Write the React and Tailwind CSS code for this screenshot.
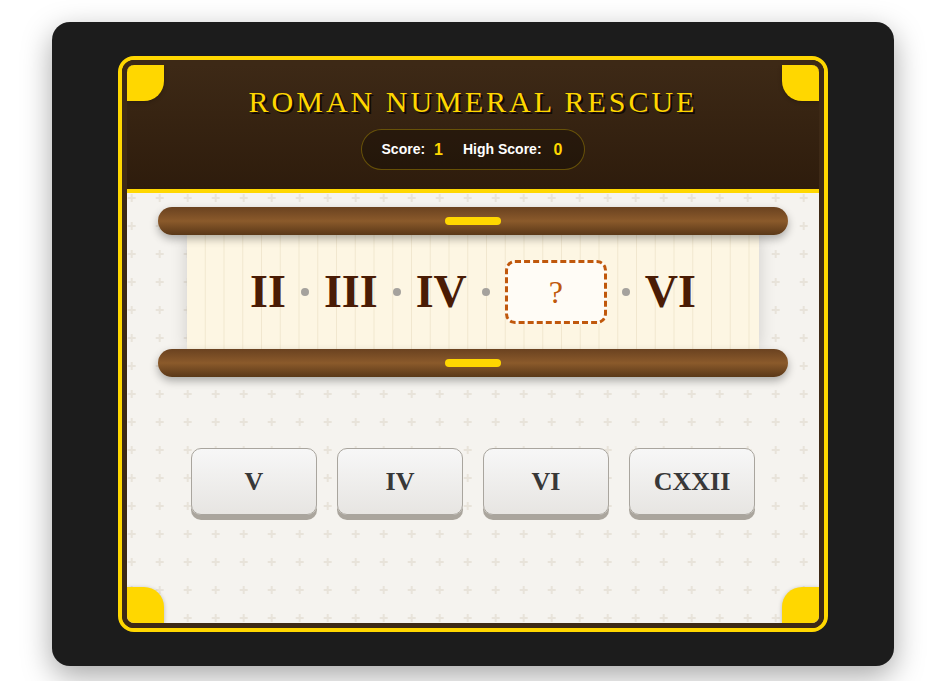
import React from "react";

const SERIF = "font-['Liberation_Serif','Times_New_Roman',serif]";
const SANS = "font-['Liberation_Sans',Arial,sans-serif]";

function Corner({ pos }) {
  const map = {
    tl: "top-0 left-0 rounded-br-[20px]",
    tr: "top-0 right-0 rounded-bl-[20px]",
    bl: "bottom-0 left-0 rounded-tr-[20px]",
    br: "bottom-0 right-0 rounded-tl-[20px]",
  };
  return (
    <div
      className={`absolute z-20 w-[37px] h-[36px] bg-[#ffd700] shadow-[0_1px_4px_rgba(0,0,0,0.25)] ${map[pos]}`}
    />
  );
}

function Rod() {
  return (
    <div className="relative z-10 mx-auto w-[630px] h-[28px] rounded-full bg-gradient-to-b from-[#6a4220] via-[#8b5a2b] to-[#5a3818] shadow-[0_4px_8px_rgba(0,0,0,0.3)] flex items-center justify-center">
      <div className="w-[56px] h-[8px] rounded-full bg-[#ffd700]" />
    </div>
  );
}

function Dot() {
  return <div className="w-[8px] h-[8px] rounded-full bg-[#a5a29d]" />;
}

function Numeral({ children }) {
  return (
    <span className={`${SERIF} text-[46px] font-bold leading-none text-[#4a1c05]`}>
      {children}
    </span>
  );
}

function Choice({ label }) {
  return (
    <button
      className={`${SERIF} w-[126px] h-[67px] rounded-[10px] border border-[#a9a59e] bg-gradient-to-b from-[#f7f7f7] to-[#e7e5e2] shadow-[0_5px_0_#aaa59d] text-[26px] font-bold text-[#383838] flex items-center justify-center`}
    >
      {label}
    </button>
  );
}

export default function App() {
  return (
    <div className="w-[938px] min-h-[681px] bg-white pl-[52px] pt-[22px]">
      <div className="w-[842px] h-[644px] rounded-[18px] bg-[#1c1c1c] shadow-[0_10px_30px_rgba(0,0,0,0.35)] px-[66px] py-[34px]">
        <div className="h-full rounded-[16px] border-4 border-[#ffd700]">
          <div className="relative h-full rounded-[12px] border-[5px] border-[#3d2916] overflow-hidden flex flex-col bg-[#f5f3ef]">
            {/* header */}
            <header className="relative z-10 bg-gradient-to-b from-[#3d2916] to-[#2e1c0c] border-b-4 border-[#ffd700] pt-5 pb-[19px] flex flex-col items-center">
              <h1
                className={`${SERIF} h-[34px] leading-[34px] text-[30px] font-normal tracking-[3px] text-[#ffd700] [text-shadow:2px_2px_0_#120a03] mb-[10px]`}
              >
                ROMAN NUMERAL RESCUE
              </h1>
              <div
                className={`${SANS} h-[41px] rounded-full border border-[#ffd700]/30 bg-black/25 pl-5 pr-[22px] flex items-center`}
              >
                <span className="text-[14px] font-bold text-white">Score:</span>
                <span className="ml-[9px] text-[16px] font-bold text-[#ffd700]">1</span>
                <span className="ml-[20px] text-[14px] font-bold text-white">High Score:</span>
                <span className="ml-[12px] text-[16px] font-bold text-[#ffd700]">0</span>
              </div>
            </header>

            {/* play area */}
            <main className="relative flex-1 pt-[14px]">
              <svg className="absolute inset-0 w-full h-full" aria-hidden="true">
                <defs>
                  <pattern id="crosses" x="-9.3" y="-9" width="28" height="28" patternUnits="userSpaceOnUse">
                    <path d="M14 10v8M10 14h8" stroke="#e8e3da" strokeWidth="2" />
                  </pattern>
                </defs>
                <rect width="100%" height="100%" fill="url(#crosses)" />
              </svg>

              <div className="relative">
                <Rod />
                <div className="mx-auto w-[572px] h-[114px] bg-[#fdf6e3] bg-[linear-gradient(90deg,transparent_17.75px,#f1e7cf_17.75px)] bg-[length:18.75px_100%] shadow-[0_0_16px_rgba(0,0,0,0.16)] flex items-center justify-center gap-[15px]">
                  <Numeral>II</Numeral>
                  <Dot />
                  <Numeral>III</Numeral>
                  <Dot />
                  <Numeral>IV</Numeral>
                  <Dot />
                  <div className="w-[102px] h-[64px] rounded-[10px] border-[3px] border-dashed border-[#c0580c] bg-[#fffcf6] flex items-center justify-center">
                    <span className={`${SERIF} text-[32px] leading-none text-[#c0580c]`}>?</span>
                  </div>
                  <Dot />
                  <Numeral>VI</Numeral>
                </div>
                <Rod />
              </div>

              <div className="relative mt-[71px] flex justify-center gap-5">
                <Choice label="V" />
                <Choice label="IV" />
                <Choice label="VI" />
                <Choice label="CXXII" />
              </div>
            </main>

            <Corner pos="tl" />
            <Corner pos="tr" />
            <Corner pos="bl" />
            <Corner pos="br" />
          </div>
        </div>
      </div>
    </div>
  );
}
